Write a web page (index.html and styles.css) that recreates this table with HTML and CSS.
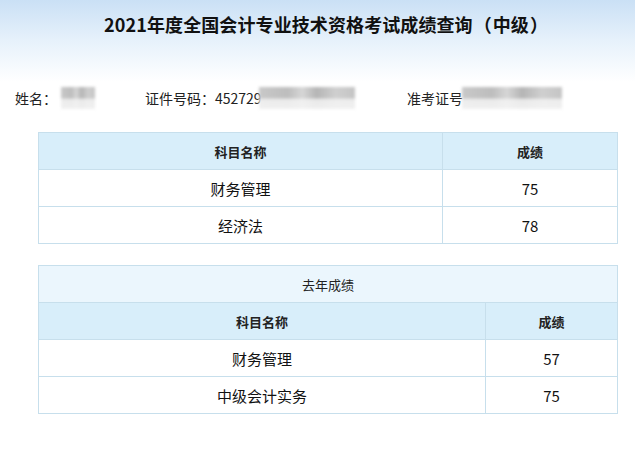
FILE: index.html
```html
<!DOCTYPE html>
<html lang="zh-CN">
<head>
<meta charset="utf-8">
<title>成绩查询</title>
<link rel="stylesheet" href="styles.css">
</head>
<body>
<div class="page">
  <h1 class="title">2021年度全国会计专业技术资格考试成绩查询<span class="paren">（</span>中级<span class="paren">）</span></h1>
  <div class="info">
    <div class="info-item item-name">姓名：<span class="blur blur-name"></span></div>
    <div class="info-item item-id">证件号码：452729<span class="blur blur-id"></span></div>
    <div class="info-item item-ticket">准考证号<span class="blur blur-ticket"></span></div>
  </div>
  <table class="score score-now">
    <colgroup><col class="c1"><col class="c2"></colgroup>
    <tr class="head"><th>科目名称</th><th>成绩</th></tr>
    <tr><td>财务管理</td><td>75</td></tr>
    <tr><td>经济法</td><td>78</td></tr>
  </table>
  <table class="score score-last">
    <colgroup><col class="c1b"><col class="c2b"></colgroup>
    <tr class="caption-row"><td colspan="2">去年成绩</td></tr>
    <tr class="head"><th>科目名称</th><th>成绩</th></tr>
    <tr><td>财务管理</td><td>57</td></tr>
    <tr><td>中级会计实务</td><td>75</td></tr>
  </table>
</div>
</body>
</html>
```
FILE: styles.css
```css
html, body {
  margin: 0;
  padding: 0;
}
body {
  background: #fff linear-gradient(to bottom, #cae0f5 0px, #e6f1fb 40px, #ffffff 82px) no-repeat;
  background-size: 100% 90px;
  font-family: "Noto Sans CJK SC", "Microsoft YaHei", sans-serif;
  color: #222;
  width: 635px;
  height: 450px;
}
.page {
  padding-top: 12px;
}
.title {
  margin: 0;
  padding-left: 18px;
  font-size: 18px;
  line-height: 24px;
  font-weight: bold;
  text-align: center;
  color: #111;
  letter-spacing: 0.1px;
}
.paren {
  display: inline-block;
  width: 20px;
  text-align: center;
}
.info {
  display: flex;
  margin-top: 51px;
  height: 22px;
  font-size: 14px;
  line-height: 22px;
  color: #222;
}
.info-item {
  display: flex;
  align-items: center;
}
.item-name {
  margin-left: 15px;
  width: 130px;
}
.item-id {
  width: 262px;
}
.blur {
  display: inline-block;
  height: 22px;
  filter: blur(1.5px);
  background:
    linear-gradient(to bottom, rgba(255,255,255,0) 0, rgba(255,255,255,0) 50%, rgba(245,245,245,0.8) 55%, rgba(245,245,245,0.9) 100%),
    linear-gradient(to right, #c8c8c8 0, #bdbdbd 30%, #d6d6d6 45%, #b5b5b5 60%, #cfcfcf 80%, #c4c4c4 100%);
}
.blur-name {
  width: 34px;
  margin-left: 4px;
}
.blur-id {
  width: 96px;
  margin-left: -3px;
}
.blur-ticket {
  width: 100px;
  margin-left: -1px;
}
.score {
  border-collapse: collapse;
  margin-left: 38px;
  width: 580px;
  table-layout: fixed;
}
.score-now {
  margin-top: 23px;
}
.score-last {
  margin-top: 21px;
}
.c1 { width: 404px; }
.c1b { width: 447px; }
.score th, .score td {
  border: 1px solid #c7dfec;
  height: 36px;
  padding: 0;
  text-align: center;
  vertical-align: middle;
}
.score th {
  background: #d8eefa;
  font-size: 13px;
  font-weight: bold;
  color: #222;
}
.score td {
  font-size: 15px;
  color: #111;
  background: #fff;
}
.score .caption-row td {
  background: #ebf6fd;
  font-size: 13px;
  color: #222;
}
```
